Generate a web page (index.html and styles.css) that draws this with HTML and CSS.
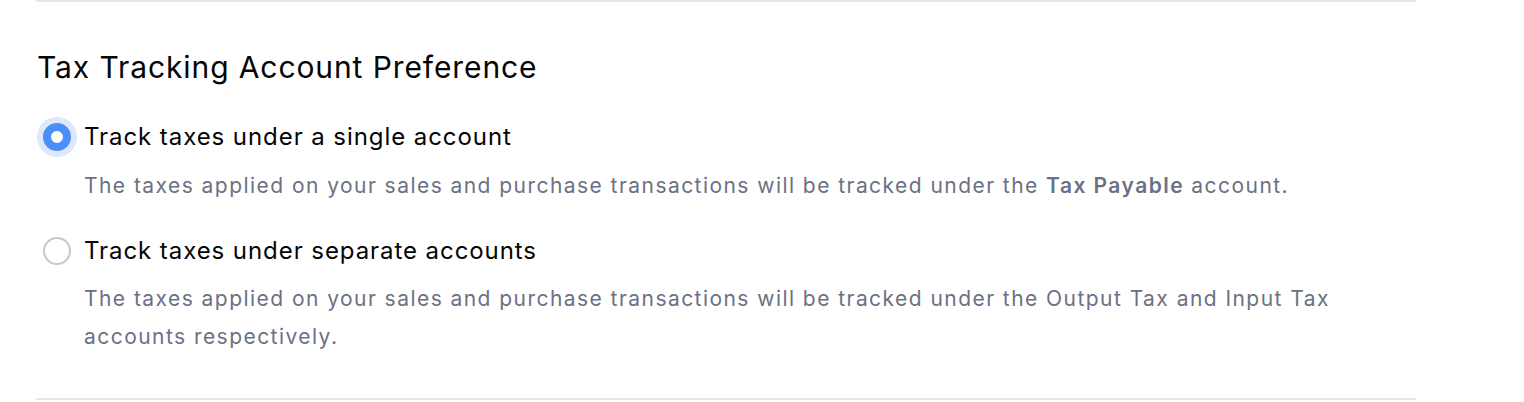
FILE: index.html
```html
<!DOCTYPE html>
<html>
<head>
<meta charset="utf-8">
<link rel="stylesheet" href="styles.css">
</head>
<body>
<section class="pref">
  <h2 class="pref-title">Tax Tracking Account Preference</h2>
  <div class="option">
    <label class="option-row">
      <span class="radio radio-checked"></span>
      <span class="option-label">Track taxes under a single account</span>
    </label>
    <p class="option-desc">The taxes applied on your sales and purchase transactions will be tracked under the <strong>Tax Payable</strong> account.</p>
  </div>
  <div class="option option-second">
    <label class="option-row">
      <span class="radio"></span>
      <span class="option-label">Track taxes under separate accounts</span>
    </label>
    <p class="option-desc">The taxes applied on your sales and purchase transactions will be tracked under the Output Tax and Input Tax accounts respectively.</p>
  </div>
</section>
</body>
</html>
```
FILE: styles.css
```css
html, body {
  margin: 0;
  padding: 0;
  background: #ffffff;
}
body {
  font-family: Inter, "Noto Sans", sans-serif;
  color: #0d0d0d;
}
.pref {
  margin-left: 36px;
  width: 1380px;
  border-top: 2px solid #e6e6e6;
  border-bottom: 2px solid #e6e6e6;
  padding: 47px 0 42px;
  display: flex;
  flex-direction: column;
}
.pref-title {
  margin: 0;
  padding-left: 1px;
  font-size: 30px;
  line-height: 36px;
  font-weight: 400;
  letter-spacing: 0.9px;
  color: #050505;
}
.option {
  display: flex;
  flex-direction: column;
  margin-top: 32px;
}
.option-second {
  margin-top: 26px;
}
.option-row {
  display: flex;
  align-items: center;
  height: 40px;
  padding-left: 7px;
}
.radio {
  width: 28px;
  height: 28px;
  box-sizing: border-box;
  border-radius: 50%;
  border: 2px solid #c8c8c8;
  background: #fff;
  flex: none;
}
.radio-checked {
  border: 8.5px solid #4a8ff7;
  box-shadow: 0 0 0 6px #dde8fc;
}
.option-label {
  margin-left: 13px;
  font-size: 24px;
  line-height: 40px;
  letter-spacing: 0.93px;
  color: #050505;
}
.option-desc {
  margin: 10px 0 0;
  padding-left: 48px;
  font-size: 21px;
  line-height: 38px;
  letter-spacing: 1.45px;
  color: #6b7184;
}
.option-second .option-desc {
  margin-top: 9px;
}
.option-desc strong {
  font-weight: 600;
}
```
